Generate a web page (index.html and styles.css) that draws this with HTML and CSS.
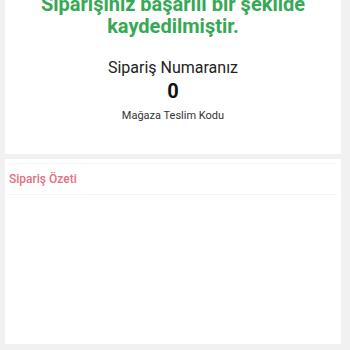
FILE: index.html
```html
<!DOCTYPE html>
<html lang="tr">
<head>
<meta charset="utf-8">
<link rel="stylesheet" href="styles.css">
</head>
<body>
<div class="page">
  <section class="card success">
    <h1 class="success-title">Siparişiniz başarılı bir şekilde kaydedilmiştir.</h1>
    <div class="order-label">Sipariş Numaranız</div>
    <div class="order-no">0</div>
    <div class="order-code">Mağaza Teslim Kodu</div>
  </section>
  <section class="card summary">
    <div class="summary-head">Sipariş Özeti</div>
    <div class="summary-body"></div>
  </section>
</div>
</body>
</html>
```
FILE: styles.css
```css
html, body {
  margin: 0;
  padding: 0;
  background: #f1f1f1;
  font-family: Roboto, "Noto Sans", Arial, sans-serif;
  overflow: hidden;
}
.page {
  padding: 0 9px 0 5px;
  display: flex;
  flex-direction: column;
  gap: 5px;
}
.card {
  background: #ffffff;
}
.success {
  margin-top: -7px;
  height: 161px;
  box-sizing: border-box;
  display: flex;
  flex-direction: column;
  align-items: center;
  text-align: center;
}
.success-title {
  margin: 0;
  width: 290px;
  font-size: 20px;
  line-height: 22px;
  font-weight: 700;
  color: #36a856;
}
.order-label {
  margin-top: 21px;
  font-size: 16px;
  line-height: 20px;
  color: #222222;
}
.order-no {
  margin-top: 2px;
  font-size: 20px;
  line-height: 22px;
  font-weight: 700;
  color: #111111;
}
.order-code {
  margin-top: 7px;
  font-size: 11px;
  line-height: 14px;
  color: #333333;
}
.summary {
  height: 185px;
  padding: 4px 4px 0 2px;
  box-sizing: border-box;
}
.summary-head {
  border-top: 1px solid #f7f7f7;
  border-bottom: 1px solid #f3f3f3;
  height: 32px;
  box-sizing: border-box;
  padding-left: 2px;
  display: flex;
  align-items: center;
  font-size: 12px;
  font-weight: 500;
  color: #e5707f;
}
```
